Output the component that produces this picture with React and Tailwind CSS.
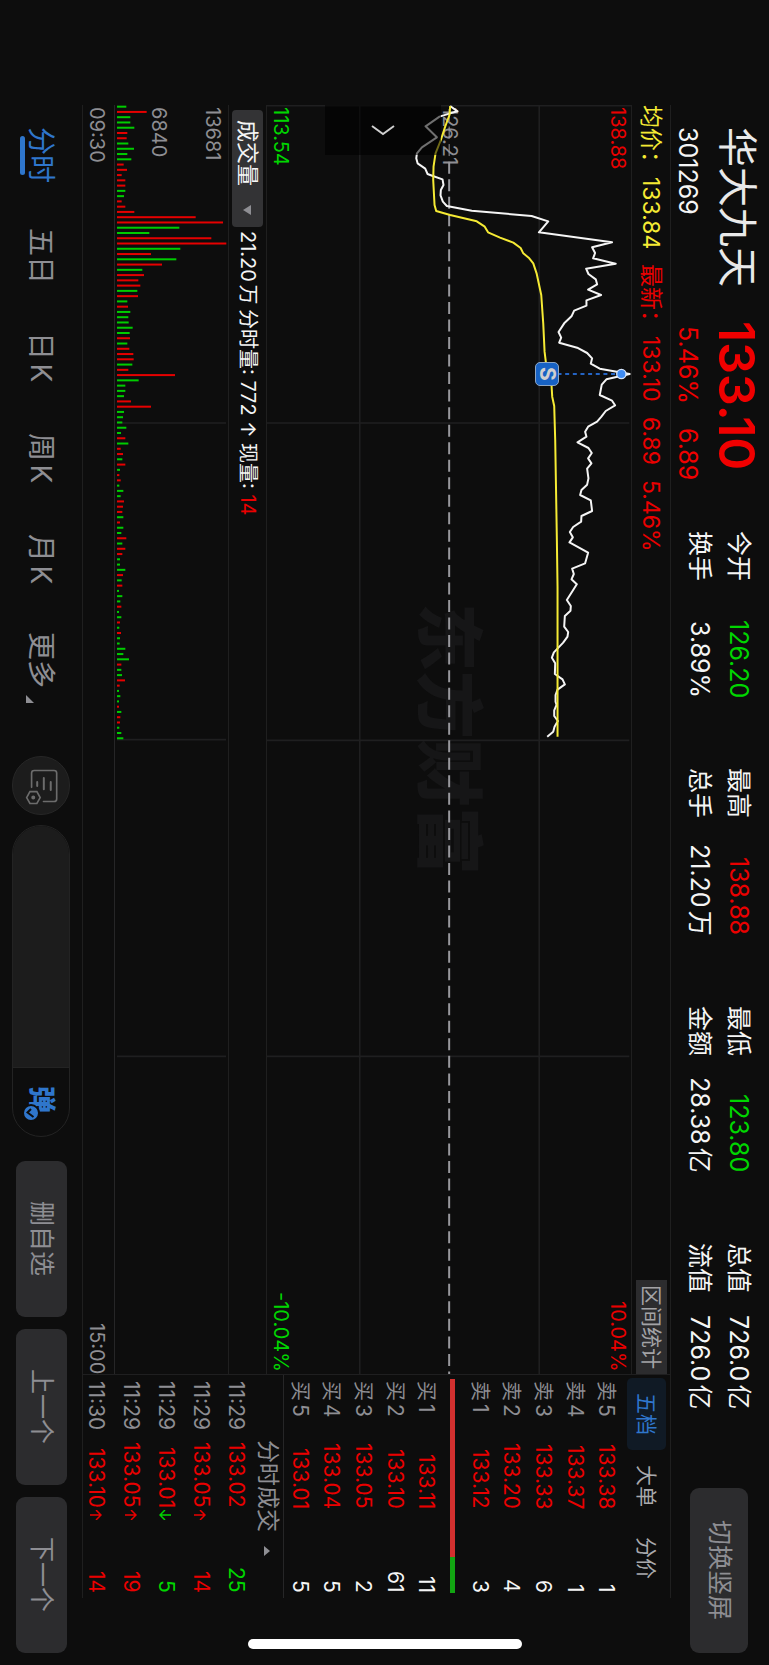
import { Fragment } from "react";

const STATS = [
  [
    { label: "今开", value: "126.20", tone: "text-[#00d600]" },
    { label: "换手", value: "3.89%", tone: "text-[#f5f5f5]" },
  ],
  [
    { label: "最高", value: "138.88", tone: "text-[#ea0000]" },
    { label: "总手", value: "21.20万", tone: "text-[#f5f5f5]" },
  ],
  [
    { label: "最低", value: "123.80", tone: "text-[#00d600]" },
    { label: "金额", value: "28.38亿", tone: "text-[#f5f5f5]" },
  ],
  [
    { label: "总值", value: "726.0亿", tone: "text-[#f5f5f5]" },
    { label: "流值", value: "726.0亿", tone: "text-[#f5f5f5]" },
  ],
];

const ASKS = [
  ["卖", "5", "133.38", "1"],
  ["卖", "4", "133.37", "1"],
  ["卖", "3", "133.33", "6"],
  ["卖", "2", "133.20", "4"],
  ["卖", "1", "133.12", "3"],
];

const BIDS = [
  ["买", "1", "133.11", "11"],
  ["买", "2", "133.10", "61"],
  ["买", "3", "133.05", "2"],
  ["买", "4", "133.04", "5"],
  ["买", "5", "133.01", "5"],
];

const TICKS = [
  { time: "11:29", price: "133.02", dir: null, volume: "25", tone: "text-[#00d600]" },
  { time: "11:29", price: "133.05", dir: "up", volume: "14", tone: "text-[#ea0000]" },
  { time: "11:29", price: "133.01", dir: "down", volume: "5", tone: "text-[#00d600]" },
  { time: "11:29", price: "133.05", dir: "up", volume: "19", tone: "text-[#ea0000]" },
  { time: "11:30", price: "133.10", dir: "up", volume: "14", tone: "text-[#ea0000]" },
];

const PERIODS = ["分时", "五日", "日K", "周K", "月K", "更多"];

// Intraday series, one "offset,time" pair per sample.
const PRICE_OPEN =
  "150,48 172,64 150,70 118,80 76,109 110,142 65,172 50,190 48,205 52,220 75,236 82,252 98,258 127,268 130,285 122,300 121,316 128,335 140,348 215,362 395,378 445,394 417,427 637,457 577,472 586,489 580,505 648,521 559,536 566,552 588,568 592,583 565,599 604,615 560,631 560,647 523,662 515,679 493,700 476,726 484,743 478,758 532,773 562,789 577,805 573,821 600,836 690,852 620,868";
const PRICE_LATE =
  "606,14 600,45 637,62 646,76 618,93 605,110 592,125 565,140 556,155 560,170 533,187 566,204 576,219 565,235 575,250 562,266 566,295 562,314 545,330 541,345 573,361 577,393 545,408 544,425 520,441 510,456 519,472 509,487 565,518 556,550 517,566 522,582 515,598 531,613 501,660 513,678 512,692 495,708 493,740 505,756 503,770 490,788 462,817 456,833 466,850 465,882 488,898 495,913 473,929 467,945 467,965 470,975 463,991 463,1008 474,1023 464,1040 460,1055 442,1070";
const AVERAGE_OPEN =
  "150,48 148,75 135,110 122,150 106,190 100,230 99,270 103,345 108,363 150,375 230,394 254,410 264,427 300,443 340,458 362,474 370,490 388,505 400,520 410,550 424,615 430,700 434,785 442,850 453,865";
const AVERAGE_LATE = "454,0 457,50 463,78 466,180 468,300 471,480 473,620 473,1070";

const joinSeries = (open, late) => {
  const shift = (text, dy) =>
    text.split(" ").map((pair) => {
      const [x, y] = pair.split(",").map(Number);
      return `${x + 401},${y + dy}`;
    });
  return [...shift(open, -45), ...shift(late, 825)].join(" ");
};

const PRICE = joinSeries(PRICE_OPEN, PRICE_LATE);
const AVERAGE = joinSeries(AVERAGE_OPEN, AVERAGE_LATE);

// Per-minute volume: r = rising minute, g = falling minute.
const VOLUME =
  "g28 r89 g40 g40 g52 r31 r29 g34 g51 g31 g43 r20 r30 r14 r25 r25 g25 g21 r14 r25 r52 r236 r318 g187 g97 r283 r328 g190 r102 g178 r135 g76 r81 r64 r70 g61 r63 g31 r33 g40 g34 g35 g47 g38 r39 g31 r37 r49 r50 g46 r34 r174 g65 g25 g25 g21 r42 r102 g21 g18 g16 g28 g12 r25 g34 r11 r18 g16 r25 g9 r7 r11 g7 g19 g11 r21 r18 r16 g19 r9 g19 g13 r28 g16 r25 r16 g9 g9 g25 r18 g14 r16 g6 g16 g10 r13 g6 g13 r9 g7 r12 g9 g8 g25 g19 g36 r13 g13 g15 r24 r8 g6 g10 g6 r6 g13 r10 r9 g7 g13 g19".split(
    " "
  );

function Header() {
  return (
    <header className="flex w-[98px] shrink-0 pt-[127px] pb-[12px]">
      <div className="flex h-[194px] shrink-0 flex-col pr-[10px]">
        <h1 className="text-[40px] leading-[44px] font-normal text-[#e9e9e9]">华大九天</h1>
        <p className="mr-[12px] text-[25px] leading-[30px]">301269</p>
      </div>
      <div className="flex h-[210px] shrink-0 flex-col pr-[10px] text-[#f00000]">
        <p className="text-[50px] leading-[44px] font-semibold">133.10</p>
        <p className="mr-[12px] flex gap-[24px] pt-[5px] text-[25px] leading-[30px]">
          <span>5.46%</span>
          <span>6.89</span>
        </p>
      </div>
      <dl className="flex flex-1 justify-between pr-[11px]">
        {STATS.map((group) => (
          <div key={group[0].label} className="grid h-[167px] auto-rows-min grid-cols-[auto_auto] justify-between">
            {group.map((item) => (
              <Fragment key={item.label}>
                <dt className="text-[25px] leading-[39px]">{item.label}</dt>
                <dd className={`text-end text-[25px] leading-[39px] ${item.tone}`}>{item.value}</dd>
              </Fragment>
            ))}
          </div>
        ))}
      </dl>
      <button
        type="button"
        className="mt-[78px] mr-[21px] flex h-[165px] w-[58px] shrink-0 items-center justify-center rounded-[9px] bg-[#2c2c2e] text-[25px] text-[#8e8e93]"
      >
        切换竖屏
      </button>
    </header>
  );
}

function Legend() {
  return (
    <div className="flex w-[39px] shrink-0 items-center justify-between border-l border-[#1f1f1f] text-[23px] leading-[38px]">
      <p className="flex gap-[15px]">
        <span className="flex gap-[3px] text-[#f5ea34]">
          <span>均价：</span>
          <span>133.84</span>
        </span>
        <span className="flex gap-[3px] text-[#ea0000]">
          <span>最新：</span>
          <span>133.10</span>
        </span>
        <span className="text-[#ea0000]">6.89</span>
        <span className="text-[#ea0000]">5.46%</span>
      </p>
      <button type="button" className="flex h-[94px] w-[31px] items-center justify-center bg-[#2c2c2e] text-[21px] text-[#a3a3a6]">
        区间统计
      </button>
    </div>
  );
}

function PriceChart() {
  return (
    <div className="relative flex flex-1 items-center justify-center text-[20px] leading-[24px]">
      <span aria-hidden="true" className="text-[68px] leading-[70px] font-black text-[#161617]">
        东方财富
      </span>
      <span className="absolute top-[2px] left-[171px] text-[#8e8e93]">126.21</span>
      <svg
        className="absolute top-0 left-0 h-full w-full"
        viewBox="0 0 1095 3807"
        preserveAspectRatio="none"
        fill="none"
        role="img"
        aria-label="分时走势"
      >
        <g stroke="#1f1f20" strokeWidth="5">
          <path d="M0 2H1095M0 954H1090M0 1906H1090M0 2854H1090M279 0V3807M819 0V3807" />
        </g>
        <path d="M548 170V3807" stroke="#98989d" strokeWidth="6" strokeDasharray="36 16.6" />
        <path d="M548 12V170" stroke="#98989d" strokeWidth="3" strokeDasharray="36 16.6" />
        <polyline points={PRICE} stroke="#f5f5f5" strokeWidth="6" strokeLinejoin="round" />
        <polyline points={AVERAGE} stroke="#f5ea34" strokeWidth="6" strokeLinejoin="round" />
        <path d="M874 807H1054" stroke="#2464c4" strokeWidth="6" strokeDasharray="12 11" />
        <circle cx="1066" cy="807" r="14" fill="#3f8cf3" stroke="#d6e6fb" strokeWidth="4" />
      </svg>
      <span className="absolute top-[2px] right-[1px] text-[#ea0000]">138.88</span>
      <span className="absolute top-[2px] left-[2px] text-[#00d600]">113.54</span>
      <span className="absolute right-[1px] bottom-[2px] text-[#ea0000]">10.04%</span>
      <span className="absolute bottom-[2px] left-[2px] text-[#00d600]">-10.04%</span>
      <button
        type="button"
        aria-label="展开"
        className="absolute top-0 left-[58px] flex h-[50px] w-[116px] items-center justify-center bg-black/55"
      >
        <svg className="h-[12px] w-[24px]" viewBox="0 0 24 12" fill="none" stroke="#d0d0d0" strokeWidth="2">
          <path d="M1 2L12 10L23 2" />
        </svg>
      </button>
      <span className="absolute top-[257px] left-[268px] flex h-[24px] w-[24px] items-center justify-center rounded-[5px] border border-[#8ea6c4] bg-[#1762c4] text-[21px] font-bold text-[#cfcfcf]">
        S
      </span>
    </div>
  );
}

function VolumeHeader() {
  return (
    <div className="flex w-[39px] shrink-0 items-center border-r border-l border-[#1f1f1f] pt-[5px] text-[20px]">
      <button type="button" className="flex h-[117px] w-[31px] items-center rounded-[4px] bg-[#333335] pt-[10px] text-[22px]">
        成交量
        <svg className="mt-[19px] mr-[2px] h-[10px] w-[8px]" viewBox="0 0 8 10" fill="#8e8e93">
          <path d="M8 0V10L0 5Z" />
        </svg>
      </button>
      <p className="flex gap-[5px] pt-[4px]">
        <span>21.20万</span>
        <span>分时量: 772</span>
        <span>↑</span>
        <span>
          现量: <span className="text-[#ea0000]">14</span>
        </span>
      </p>
    </div>
  );
}

function VolumeChart() {
  return (
    <div className="relative w-[114px] shrink-0 border-l border-[#262627] text-[20px] leading-[24px] text-[#8e8e93]">
      <svg
        className="absolute top-0 left-0 h-full w-full"
        viewBox="0 0 339 3807"
        preserveAspectRatio="none"
        role="img"
        aria-label="成交量"
      >
        <path d="M6 954H333M6 1904H333M6 2854H333" stroke="#1f1f20" strokeWidth="5" />
        {VOLUME.map((entry, index) => (
          <rect
            key={index}
            x="6"
            y={2 + index * 15.79}
            width={entry.slice(1)}
            height="6"
            fill={entry[0] === "r" ? "#e60000" : "#00cc00"}
          />
        ))}
      </svg>
      <span className="absolute top-[2px] right-[3px]">13681</span>
      <span className="absolute top-[2px] right-[57px]">6840</span>
    </div>
  );
}

function Charts() {
  return (
    <section className="flex min-h-0 flex-1 flex-col">
      <Legend />
      <PriceChart />
      <VolumeHeader />
      <VolumeChart />
      <div className="flex w-[31px] shrink-0 justify-between pt-[2px] text-[20px] leading-[34px] text-[#8e8e93]">
        <span>09:30</span>
        <span>15:00</span>
      </div>
    </section>
  );
}

function Levels({ rows, label }) {
  return (
    <table aria-label={label} className="h-full w-[158px] table-fixed text-[21px] leading-[24px]">
      <tbody>
        {rows.map(([side, level, price, volume]) => (
          <tr key={level}>
            <th scope="row" className="h-[52px] p-0 text-start align-middle font-normal text-[#8e8e93]">
              <span className="flex gap-[3px]">
                <span className="text-[20px]">{side}</span>
                {level}
              </span>
            </th>
            <td className="h-[76px] p-0 text-end align-middle text-[#ea0000]">{price}</td>
            <td className="p-0 text-end align-middle">{volume}</td>
          </tr>
        ))}
      </tbody>
    </table>
  );
}

function TickArrow({ dir }) {
  if (!dir) return null;
  return (
    <svg
      className={`mt-[2px] inline-block h-[10px] w-[12px] ${dir === "up" ? "text-[#ea0000]" : "text-[#00d600]"}`}
      viewBox="0 0 12 10"
      fill="none"
      stroke="currentColor"
      strokeWidth="1.5"
    >
      {dir === "up" ? <path d="M0 5H11M6 0L11 5L6 10" /> : <path d="M12 5H1M6 0L1 5L6 10" />}
    </svg>
  );
}

function Book() {
  return (
    <aside className="flex h-[224px] shrink-0 flex-col border-t border-[#1f1f20]">
      <div role="tablist" className="mt-[3px] mr-[4px] mb-[4px] flex w-[39px] shrink-0 text-[21px]">
        <button type="button" role="tab" aria-selected="true" className="flex-1 rounded-[5px] bg-[#101a25] text-[#2f76cc]">
          五档
        </button>
        <button type="button" role="tab" aria-selected="false" className="flex-1 text-[#a9a9ac]">
          大单
        </button>
        <button type="button" role="tab" aria-selected="false" className="flex-1 text-[#a9a9ac]">
          分价
        </button>
      </div>
      <div className="mt-[6px] mr-[5px] mb-[5px] w-[158px] shrink-0">
        <Levels rows={ASKS} label="卖盘" />
      </div>
      <div className="mt-[4px] mr-[9px] mb-[5px] flex w-[5px] shrink-0">
        <div className="flex-5 bg-[#d2302f]" />
        <div className="flex-1 bg-[#12a512]" />
      </div>
      <div className="mt-[6px] mr-[8px] mb-[5px] w-[158px] shrink-0">
        <Levels rows={BIDS} label="买盘" />
      </div>
      <button
        type="button"
        className="flex w-[31px] shrink-0 items-center justify-center gap-[14px] border-r border-[#262627] pt-[22px] text-[23px] text-[#8e8e93]"
      >
        分时成交
        <svg className="mr-[2px] h-[10px] w-[6px]" viewBox="0 0 6 10" fill="#8e8e93">
          <path d="M0 0V10L6 5Z" />
        </svg>
      </button>
      <div className="mt-[6px] mb-[5px] w-[174px] shrink-0">
        <table aria-label="分时成交" className="h-full w-full table-fixed text-[21px] leading-[24px]">
          <tbody>
            {TICKS.map((tick, index) => (
              <tr key={index}>
                <td className="h-[52px] p-0 align-middle text-[#8e8e93]">{tick.time}</td>
                <td className="h-[75px] p-0 text-end align-middle text-[#ea0000]">{tick.price}</td>
                <td className="h-[16px] p-0 align-middle leading-[12px]">
                  <TickArrow dir={tick.dir} />
                </td>
                <td className={`p-0 text-end align-middle ${tick.tone}`}>{tick.volume}</td>
              </tr>
            ))}
          </tbody>
        </table>
      </div>
    </aside>
  );
}

function Toolbar() {
  const action =
    "flex h-[156px] w-[51px] shrink-0 items-center justify-center rounded-[9px] bg-[#2c2c2e] text-[25px] text-[#8e8e93]";
  return (
    <footer className="flex w-[82px] shrink-0 items-center pt-[105px] pb-[12px]">
      <nav className="grid h-[606px] shrink-0 grid-cols-6">
        {PERIODS.map((name, index) => (
          <button
            key={name}
            type="button"
            className={`relative flex items-center justify-center text-[28px] leading-[40px] ${
              index === 0 ? "text-[#2f76cc]" : "text-[#8e8e93]"
            }`}
          >
            {name}
            {index === 0 && <span className="absolute left-[-1px] h-[39px] w-[5px] rounded-full bg-[#2f76cc]" />}
            {index === 5 && (
              <svg className="absolute bottom-[8px] left-[5px] h-[8px] w-[8px]" viewBox="0 0 8 8" fill="#8e8e93">
                <path d="M0 0V8H8Z" />
              </svg>
            )}
          </button>
        ))}
      </nav>
      <button
        type="button"
        aria-label="指标设置"
        className="mt-[45px] flex h-[59px] w-[58px] shrink-0 items-center justify-center rounded-full border border-[#262626] bg-[#1c1c1c]"
      >
        <svg className="h-[38px] w-[35px]" viewBox="66 80 106 114" fill="none" stroke="#6c6c6c" strokeWidth="5" strokeLinecap="round">
          <path d="M89 141V98Q89 90 97 90H157Q165 90 165 98V176Q165 184 157 184H125" />
          <path d="M106 125V137M126 113V147M147 125V149" strokeWidth="6" />
          <path d="M74 172L84 154H105L115 172L105 190H84Z" />
          <circle cx="94" cy="172" r="3.5" fill="#6c6c6c" />
        </svg>
      </button>
      <div className="mt-[10px] flex min-h-0 w-[58px] flex-1 overflow-hidden rounded-full border border-[#232323]">
        <input type="text" aria-label="弹幕" className="h-0 min-h-0 w-full flex-1 bg-[#1c1c1c] outline-none" />
        <button
          type="button"
          aria-label="弹幕开关"
          className="relative flex h-[69px] w-full shrink-0 items-center justify-center border-t border-[#232323] pb-[6px] text-[27px] font-black text-[#2f76cc]"
        >
          弹
          <svg className="absolute top-[36px] left-[9px] h-[18px] w-[18px]" viewBox="0 0 18 18" fill="none">
            <circle cx="9" cy="9" r="8" fill="#2f76cc" stroke="#0d0d0d" strokeWidth="2" />
            <path d="M9 5L5.500 8.500L11.500 13" stroke="#0d0d0d" strokeWidth="2" />
          </svg>
        </button>
      </div>
      <div className="mt-[24px] flex shrink-0 gap-[12px]">
        <button type="button" className={action}>
          删自选
        </button>
        <button type="button" className={action}>
          上一个
        </button>
        <button type="button" className={action}>
          下一个
        </button>
      </div>
    </footer>
  );
}

export default function App() {
  return (
    <div className="relative flex min-h-screen w-full flex-col overflow-hidden bg-[#0d0d0d] font-[Inter,'Noto_Sans_CJK_SC',sans-serif] text-[#f5f5f5] [text-autospace:normal] [text-orientation:sideways] [writing-mode:vertical-rl]">
      <Header />
      <main className="mt-[105px] mb-[67px] flex min-w-0 flex-1 border-r border-l border-[#1f1f1f]">
        <Charts />
        <Book />
      </main>
      <Toolbar />
      <div className="absolute bottom-[16px] left-1/2 h-[10px] w-[274px] -translate-x-1/2 rounded-full bg-white" />
    </div>
  );
}
